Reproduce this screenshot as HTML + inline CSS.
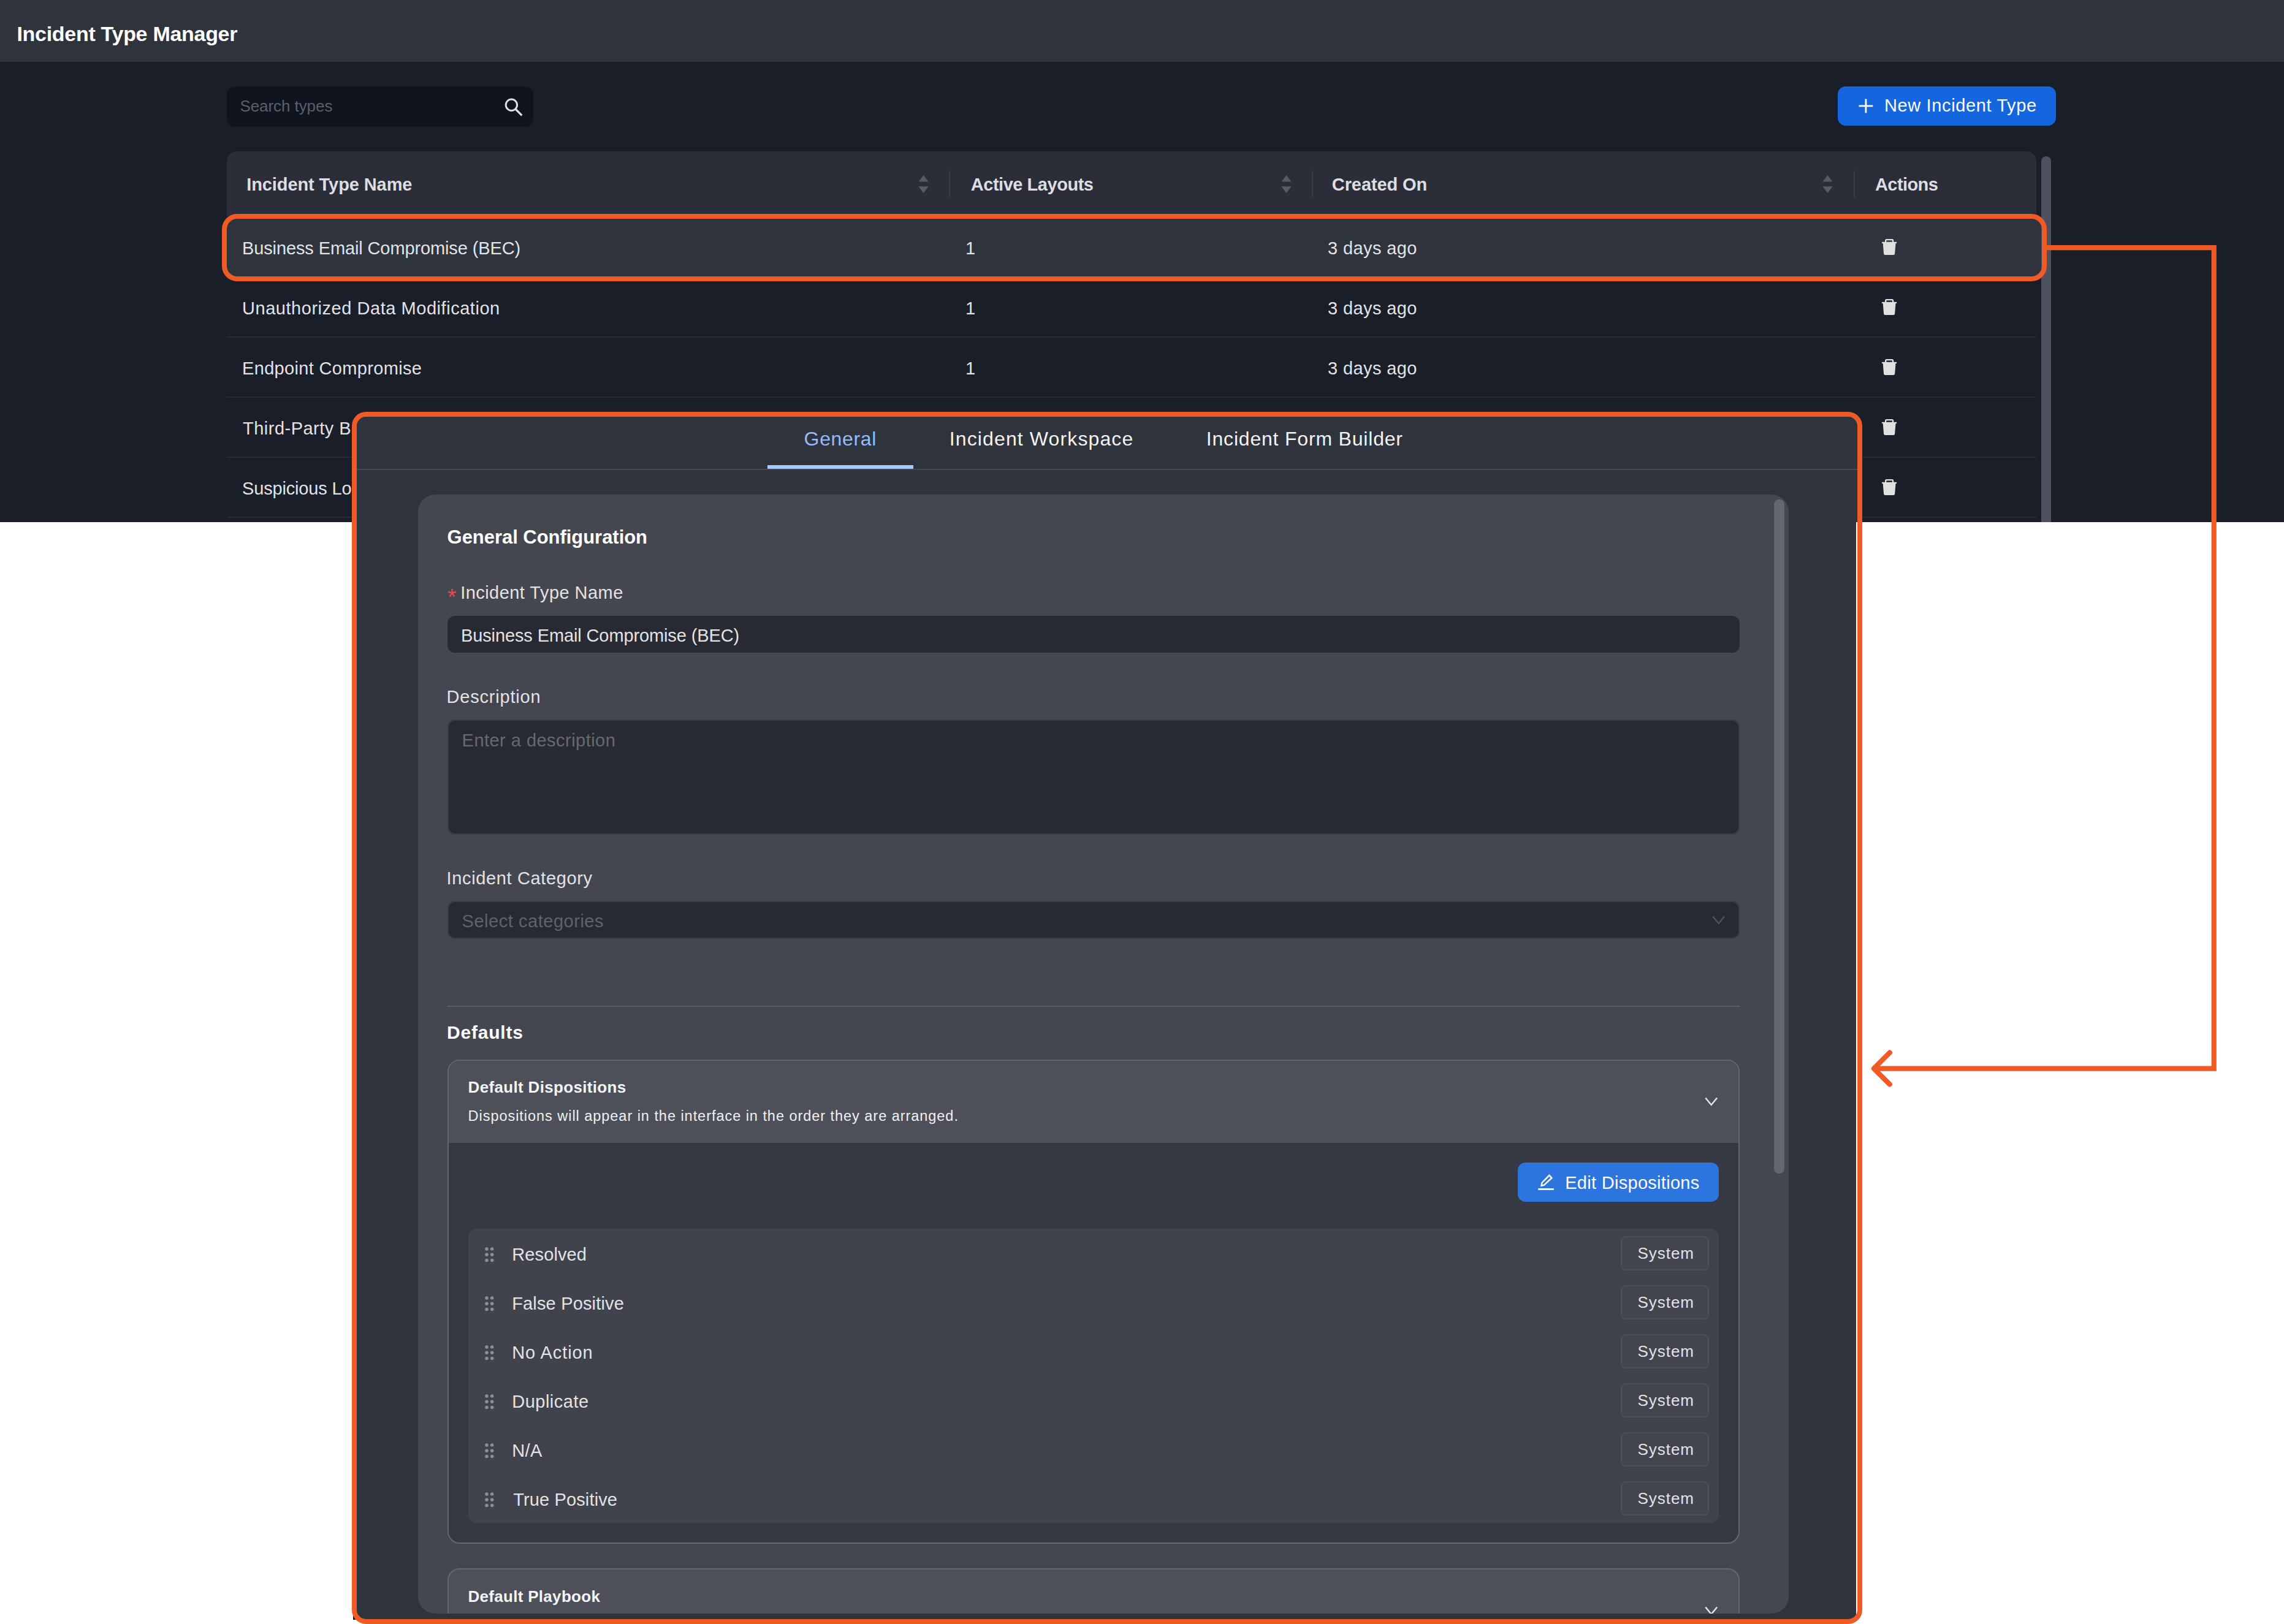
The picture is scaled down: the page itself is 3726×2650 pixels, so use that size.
<!DOCTYPE html>
<html lang="en">
<head>
<meta charset="utf-8">
<title>Incident Type Manager</title>
<style>
*{box-sizing:border-box;margin:0;padding:0}
html,body{width:3726px;height:2650px;overflow:hidden;background:#fff}
body{position:relative;font-family:"Liberation Sans",sans-serif;color:#e2e3e6}
.a{position:absolute}
.t{position:absolute;white-space:nowrap;line-height:40px;height:40px}
.b{font-weight:700}
#app{left:0;top:0;width:3726px;height:852px;background:#1a1e29;overflow:hidden}
#hdr{left:0;top:0;width:3726px;height:101px;background:#2f333c}
#search{left:370px;top:141px;width:500px;height:66px;border-radius:13.5px;background:#10141f}
#newbtn{left:2998px;top:141px;width:356px;height:64px;border-radius:13px;background:#1466de}
#thead{left:370px;top:247px;width:2952px;height:106px;background:#2b2e39;border-radius:16px 16px 0 0}
.vd{position:absolute;top:279px;width:2px;height:43px;background:#3a3d48}
.hl{position:absolute;left:370px;width:2952px;height:2px;background:#282b36}
#tscroll{left:3330px;top:255px;width:16px;height:620px;border-radius:8px;background:#4d515d}
#rowbg{left:366px;top:353px;width:2969px;height:102px;border-radius:18px;background:#2f333c}
#rowhl{left:362px;top:349px;width:2977px;height:110px;border:8px solid #f05a24;border-radius:25px}
#mbg{left:578px;top:676px;width:2456px;height:1970px;border-radius:12px 12px 12px 12px;background:#2f333c}
#mart{left:576px;top:2632px;width:8px;height:11px;background:#10151e}
#modal{left:574px;top:672px;width:2464px;height:1978px;border:8px solid #f05a24;border-radius:23px}
#card{left:682px;top:807px;width:2236px;height:1826px;border-radius:28px;background:#44474f;overflow:hidden}
#card>.o{position:absolute;left:-682px;top:-807px;width:3726px;height:2650px}
.inp{position:absolute;left:730px;width:2108px;border-radius:12px;background:#272a33}
.inb{border:2px solid #393c45}
#pan1{left:730px;top:1729px;width:2108px;height:790px;border:2px solid #66676d;border-radius:20px;background:#363943;overflow:hidden}
#pan1h{left:0;top:0;width:2104px;height:134px;background:#4d5059}
#pan2{left:730px;top:2559px;width:2108px;height:200px;border:2px solid #66676d;border-radius:20px;background:#4d5059}
#list{left:764px;top:2005px;width:2040px;height:480px;border-radius:14px;background:#40434c}
.tag{position:absolute;left:2644px;width:144px;height:56px;border:2px solid #4d5059;border-radius:9px;background:#42454e}
#editbtn{left:2476px;top:1897px;width:328px;height:64px;border-radius:12.5px;background:#2c74de}
</style>
</head>
<body>
<div id="app" class="a">
<div id="hdr" class="a"></div>
<div class="t b" id="x1" style="left:27.40px;top:35.02px;font-size:34px;color:#ffffff;letter-spacing:-0.290px">Incident Type Manager</div>
<div id="search" class="a"></div>
<div class="t" id="x2" style="left:391.40px;top:153.19px;font-size:26px;color:#5b5f6b;letter-spacing:-0.067px">Search types</div>
<svg class="a" style="left:820px;top:158px" width="36" height="36" viewBox="820 158 36 36"><circle cx="834.4" cy="171.3" r="9.2" fill="none" stroke="#dee0e6" stroke-width="3"/><path d="M841 178 L851.3 188.4" stroke="#dee0e6" stroke-width="3.2"/></svg>
<div id="newbtn" class="a"></div>
<svg class="a" style="left:3030px;top:160px" width="28" height="26" viewBox="3030 160 28 26"><path d="M3032.5 172.9 H3055.3 M3043.9 161.5 V184.3" stroke="#fff" stroke-width="2.8" fill="none"/></svg>
<div class="t" id="x11" style="left:3074.00px;top:152.15px;font-size:29px;color:#ffffff;letter-spacing:0.631px">New Incident Type</div>
<div id="thead" class="a"></div>
<div id="rowbg" class="a"></div>
<div class="t b" id="x3" style="left:402.20px;top:280.95px;font-size:29px;color:#dddee1;letter-spacing:-0.089px">Incident Type Name</div>
<div class="t b" id="x7" style="left:1583.80px;top:280.95px;font-size:29px;color:#dddee1;letter-spacing:-0.470px">Active Layouts</div>
<div class="t b" id="x8" style="left:2172.80px;top:280.95px;font-size:29px;color:#dddee1;letter-spacing:-0.091px">Created On</div>
<div class="t b" id="x10" style="left:3059.00px;top:280.95px;font-size:29px;color:#dddee1;letter-spacing:-0.584px">Actions</div>
<div class="vd" style="left:1548.3px"></div>
<div class="vd" style="left:2140.2px"></div>
<div class="vd" style="left:3024.2px"></div>
<svg class="a" style="left:1497.5px;top:285.7px" width="17" height="29" viewBox="0 0 17 29"><path d="M8.5 0 L16.6 10.6 H0.4 Z M8.5 28.9 L16.6 18.3 H0.4 Z" fill="#575b67"/></svg>
<svg class="a" style="left:2089.5px;top:285.7px" width="17" height="29" viewBox="0 0 17 29"><path d="M8.5 0 L16.6 10.6 H0.4 Z M8.5 28.9 L16.6 18.3 H0.4 Z" fill="#575b67"/></svg>
<svg class="a" style="left:2973.3px;top:285.7px" width="17" height="29" viewBox="0 0 17 29"><path d="M8.5 0 L16.6 10.6 H0.4 Z M8.5 28.9 L16.6 18.3 H0.4 Z" fill="#575b67"/></svg>
<div class="hl" style="top:549px"></div>
<div class="hl" style="top:647px"></div>
<div class="hl" style="top:745px"></div>
<div class="hl" style="top:843px"></div>
<div class="t" id="r0a" style="left:395.00px;top:385.35px;font-size:29px;color:#e2e3e6;letter-spacing:-0.117px">Business Email Compromise (BEC)</div>
<div class="t" id="r0b" style="left:1575.00px;top:385.35px;font-size:29px;color:#e2e3e6">1</div>
<div class="t" id="r0c" style="left:2166.00px;top:385.35px;font-size:29px;color:#e2e3e6;letter-spacing:0.391px">3 days ago</div>
<svg class="a" style="left:3069.9px;top:390.1px" width="25" height="27" viewBox="0 0 25 27"><path d="M0.6 4.7 H23.6 a0.6 0.6 0 0 1 0.6 0.6 V6.5 a0.6 0.6 0 0 1 -0.6 0.6 H22.5 L21.15 23.7 a2.3 2.3 0 0 1 -2.3 2.2 H5.35 a2.3 2.3 0 0 1 -2.3 -2.2 L1.7 7.1 H0.6 a0.6 0.6 0 0 1 -0.6 -0.6 V5.3 a0.6 0.6 0 0 1 0.6 -0.6 Z" fill="#e0e0e0"/><path d="M6.15 5.2 V2.7 a1.5 1.5 0 0 1 1.5 -1.5 h8.9 a1.5 1.5 0 0 1 1.5 1.5 V5.2" fill="none" stroke="#e0e0e0" stroke-width="2.3"/></svg>
<div class="t" id="r1a" style="left:395.00px;top:483.35px;font-size:29px;color:#e2e3e6;letter-spacing:0.538px">Unauthorized Data Modification</div>
<div class="t" id="r1b" style="left:1575.00px;top:483.35px;font-size:29px;color:#e2e3e6">1</div>
<div class="t" id="r1c" style="left:2166.00px;top:483.35px;font-size:29px;color:#e2e3e6;letter-spacing:0.391px">3 days ago</div>
<svg class="a" style="left:3069.9px;top:488.1px" width="25" height="27" viewBox="0 0 25 27"><path d="M0.6 4.7 H23.6 a0.6 0.6 0 0 1 0.6 0.6 V6.5 a0.6 0.6 0 0 1 -0.6 0.6 H22.5 L21.15 23.7 a2.3 2.3 0 0 1 -2.3 2.2 H5.35 a2.3 2.3 0 0 1 -2.3 -2.2 L1.7 7.1 H0.6 a0.6 0.6 0 0 1 -0.6 -0.6 V5.3 a0.6 0.6 0 0 1 0.6 -0.6 Z" fill="#e0e0e0"/><path d="M6.15 5.2 V2.7 a1.5 1.5 0 0 1 1.5 -1.5 h8.9 a1.5 1.5 0 0 1 1.5 1.5 V5.2" fill="none" stroke="#e0e0e0" stroke-width="2.3"/></svg>
<div class="t" id="r2a" style="left:395.00px;top:581.35px;font-size:29px;color:#e2e3e6;letter-spacing:0.334px">Endpoint Compromise</div>
<div class="t" id="r2b" style="left:1575.00px;top:581.35px;font-size:29px;color:#e2e3e6">1</div>
<div class="t" id="r2c" style="left:2166.00px;top:581.35px;font-size:29px;color:#e2e3e6;letter-spacing:0.391px">3 days ago</div>
<svg class="a" style="left:3069.9px;top:586.1px" width="25" height="27" viewBox="0 0 25 27"><path d="M0.6 4.7 H23.6 a0.6 0.6 0 0 1 0.6 0.6 V6.5 a0.6 0.6 0 0 1 -0.6 0.6 H22.5 L21.15 23.7 a2.3 2.3 0 0 1 -2.3 2.2 H5.35 a2.3 2.3 0 0 1 -2.3 -2.2 L1.7 7.1 H0.6 a0.6 0.6 0 0 1 -0.6 -0.6 V5.3 a0.6 0.6 0 0 1 0.6 -0.6 Z" fill="#e0e0e0"/><path d="M6.15 5.2 V2.7 a1.5 1.5 0 0 1 1.5 -1.5 h8.9 a1.5 1.5 0 0 1 1.5 1.5 V5.2" fill="none" stroke="#e0e0e0" stroke-width="2.3"/></svg>
<div class="t" id="r3a" style="left:396.00px;top:679.35px;font-size:29px;color:#e2e3e6;letter-spacing:0.486px">Third-Party Breach</div>
<div class="t" id="r3b" style="left:1581.00px;top:679.95px;font-size:29px;color:#e2e3e6">1</div>
<div class="t" id="r3c" style="left:2173.00px;top:679.95px;font-size:29px;color:#e2e3e6;letter-spacing:8.278px">3 days ago</div>
<svg class="a" style="left:3069.9px;top:684.1px" width="25" height="27" viewBox="0 0 25 27"><path d="M0.6 4.7 H23.6 a0.6 0.6 0 0 1 0.6 0.6 V6.5 a0.6 0.6 0 0 1 -0.6 0.6 H22.5 L21.15 23.7 a2.3 2.3 0 0 1 -2.3 2.2 H5.35 a2.3 2.3 0 0 1 -2.3 -2.2 L1.7 7.1 H0.6 a0.6 0.6 0 0 1 -0.6 -0.6 V5.3 a0.6 0.6 0 0 1 0.6 -0.6 Z" fill="#e0e0e0"/><path d="M6.15 5.2 V2.7 a1.5 1.5 0 0 1 1.5 -1.5 h8.9 a1.5 1.5 0 0 1 1.5 1.5 V5.2" fill="none" stroke="#e0e0e0" stroke-width="2.3"/></svg>
<div class="t" id="r4a" style="left:395.00px;top:777.35px;font-size:29px;color:#e2e3e6;letter-spacing:-0.165px">Suspicious Login</div>
<div class="t" id="r4b" style="left:1576.50px;top:777.80px;font-size:29px;color:#e2e3e6">1</div>
<div class="t" id="r4c" style="left:2166.50px;top:777.80px;font-size:29px;color:#e2e3e6">3 days ago</div>
<svg class="a" style="left:3069.9px;top:782.1px" width="25" height="27" viewBox="0 0 25 27"><path d="M0.6 4.7 H23.6 a0.6 0.6 0 0 1 0.6 0.6 V6.5 a0.6 0.6 0 0 1 -0.6 0.6 H22.5 L21.15 23.7 a2.3 2.3 0 0 1 -2.3 2.2 H5.35 a2.3 2.3 0 0 1 -2.3 -2.2 L1.7 7.1 H0.6 a0.6 0.6 0 0 1 -0.6 -0.6 V5.3 a0.6 0.6 0 0 1 0.6 -0.6 Z" fill="#e0e0e0"/><path d="M6.15 5.2 V2.7 a1.5 1.5 0 0 1 1.5 -1.5 h8.9 a1.5 1.5 0 0 1 1.5 1.5 V5.2" fill="none" stroke="#e0e0e0" stroke-width="2.3"/></svg>
<div id="tscroll" class="a"></div>
<div id="rowhl" class="a"></div>
</div>
<div id="mart" class="a"></div>
<div id="mbg" class="a"></div>
<div class="a" style="left:3027.9px;top:852px;width:4px;height:1792px;background:#fff"></div>
<div id="modal" class="a"></div>
<div class="a" style="left:582px;top:765px;width:2448px;height:2px;background:#464953"></div>
<div class="a" style="left:1252px;top:759px;width:238px;height:6px;background:#a4cbfd"></div>
<div class="t" id="x12" style="left:1311.60px;top:696.01px;font-size:32px;color:#93bdf9;letter-spacing:0.649px">General</div>
<div class="t" id="x13" style="left:1548.80px;top:696.01px;font-size:32px;color:#f4f4f5;letter-spacing:1.118px">Incident Workspace</div>
<div class="t" id="x14" style="left:1967.80px;top:696.01px;font-size:32px;color:#f4f4f5;letter-spacing:0.805px">Incident Form Builder</div>
<div id="card" class="a"><div class="o">
<div class="a" style="left:2894px;top:815px;width:16.5px;height:1100px;border-radius:8px;background:#64676f"></div>
<div class="t b" id="x15" style="left:729.60px;top:857.26px;font-size:31px;color:#ffffff;letter-spacing:-0.040px">General Configuration</div>
<div class="t" id="ast" style="left:730px;top:954.8px;font-size:37px;color:#e34a4c">*</div>
<div class="t" id="x16" style="left:751.20px;top:947.25px;font-size:29px;color:#e2e3e6;letter-spacing:0.452px">Incident Type Name</div>
<div class="inp" style="top:1005px;height:60px"></div>
<div class="t" id="x17" style="left:752.00px;top:1017.35px;font-size:29px;color:#e2e3e6;letter-spacing:-0.117px">Business Email Compromise (BEC)</div>
<div class="t" id="x18" style="left:728.60px;top:1116.95px;font-size:29px;color:#e2e3e6;letter-spacing:0.790px">Description</div>
<div class="inp inb" style="top:1174px;height:188px"></div>
<div class="t" id="x19" style="left:753.60px;top:1187.65px;font-size:29px;color:#666972;letter-spacing:0.468px">Enter a description</div>
<div class="t" id="x20" style="left:728.60px;top:1413.35px;font-size:29px;color:#e2e3e6;letter-spacing:0.629px">Incident Category</div>
<div class="inp inb" style="top:1470px;height:62px"></div>
<div class="t" id="x21" style="left:753.60px;top:1482.55px;font-size:29px;color:#5f626b;letter-spacing:0.529px">Select categories</div>
<svg class="a" style="left:2793px;top:1493.5px" width="22" height="15" viewBox="0 0 22 15"><path d="M1.3 1.5 L10.7 12.9 L20.1 1.5" fill="none" stroke="#50535d" stroke-width="2.4"/></svg>
<div class="a" style="left:730px;top:1641px;width:2108px;height:2px;background:#5a5d65"></div>
<div class="t b" id="x22" style="left:729.00px;top:1664.61px;font-size:30px;color:#ffffff;letter-spacing:0.805px">Defaults</div>
<div id="pan1" class="a"><div id="pan1h" class="a"></div></div>
<div class="t b" id="x23" style="left:763.60px;top:1753.89px;font-size:26px;color:#f4f4f5;letter-spacing:0.330px">Default Dispositions</div>
<div class="t" id="x24" style="left:763.60px;top:1800.86px;font-size:23.5px;color:#f0f0f2;letter-spacing:0.960px">Dispositions will appear in the interface in the order they are arranged.</div>
<svg class="a" style="left:2781px;top:1790.3px" width="22" height="15" viewBox="0 0 22 15"><path d="M1.3 1.5 L10.7 12.9 L20.1 1.5" fill="none" stroke="#e6e7ea" stroke-width="2.4"/></svg>
<div id="editbtn" class="a"></div>
<svg class="a" style="left:2505px;top:1912px" width="34" height="34" viewBox="2505 1912 34 34"><path d="M2509.3 1940.45 H2534.8" stroke="#fff" stroke-width="2.9" fill="none"/><path d="M2527.4 1917.8 L2531.3 1922.1 L2519.1 1933.7 L2514.6 1934.9 L2515.5 1930 Z" fill="none" stroke="#fff" stroke-width="2.5" stroke-linejoin="miter"/></svg>
<div class="t" id="x31" style="left:2553.20px;top:1909.55px;font-size:29px;color:#ffffff;letter-spacing:0.295px">Edit Dispositions</div>
<div id="list" class="a"></div>
<svg class="a" style="left:790.7px;top:2034.9px" width="15" height="25" viewBox="0 0 15 25"><g fill="#8c8f97"><circle cx="3" cy="3" r="2.75"/><circle cx="11.7" cy="3" r="2.75"/><circle cx="3" cy="12.2" r="2.75"/><circle cx="11.7" cy="12.2" r="2.75"/><circle cx="3" cy="21.4" r="2.75"/><circle cx="11.7" cy="21.4" r="2.75"/></g></svg>
<div class="t" id="i0" style="left:835.20px;top:2026.95px;font-size:29px;color:#e2e3e6;letter-spacing:0.130px">Resolved</div>
<div class="tag" style="top:2017px"></div>
<div class="t" id="s0" style="left:2671.40px;top:2024.59px;font-size:26px;color:#e2e3e6;letter-spacing:0.980px">System</div>
<svg class="a" style="left:790.7px;top:2114.9px" width="15" height="25" viewBox="0 0 15 25"><g fill="#8c8f97"><circle cx="3" cy="3" r="2.75"/><circle cx="11.7" cy="3" r="2.75"/><circle cx="3" cy="12.2" r="2.75"/><circle cx="11.7" cy="12.2" r="2.75"/><circle cx="3" cy="21.4" r="2.75"/><circle cx="11.7" cy="21.4" r="2.75"/></g></svg>
<div class="t" id="i1" style="left:835.20px;top:2106.95px;font-size:29px;color:#e2e3e6;letter-spacing:0.162px">False Positive</div>
<div class="tag" style="top:2097px"></div>
<div class="t" id="s1" style="left:2671.40px;top:2104.59px;font-size:26px;color:#e2e3e6;letter-spacing:0.980px">System</div>
<svg class="a" style="left:790.7px;top:2194.9px" width="15" height="25" viewBox="0 0 15 25"><g fill="#8c8f97"><circle cx="3" cy="3" r="2.75"/><circle cx="11.7" cy="3" r="2.75"/><circle cx="3" cy="12.2" r="2.75"/><circle cx="11.7" cy="12.2" r="2.75"/><circle cx="3" cy="21.4" r="2.75"/><circle cx="11.7" cy="21.4" r="2.75"/></g></svg>
<div class="t" id="i2" style="left:835.20px;top:2186.95px;font-size:29px;color:#e2e3e6;letter-spacing:0.925px">No Action</div>
<div class="tag" style="top:2177px"></div>
<div class="t" id="s2" style="left:2671.40px;top:2184.59px;font-size:26px;color:#e2e3e6;letter-spacing:0.980px">System</div>
<svg class="a" style="left:790.7px;top:2274.9px" width="15" height="25" viewBox="0 0 15 25"><g fill="#8c8f97"><circle cx="3" cy="3" r="2.75"/><circle cx="11.7" cy="3" r="2.75"/><circle cx="3" cy="12.2" r="2.75"/><circle cx="11.7" cy="12.2" r="2.75"/><circle cx="3" cy="21.4" r="2.75"/><circle cx="11.7" cy="21.4" r="2.75"/></g></svg>
<div class="t" id="i3" style="left:835.20px;top:2266.95px;font-size:29px;color:#e2e3e6;letter-spacing:0.499px">Duplicate</div>
<div class="tag" style="top:2257px"></div>
<div class="t" id="s3" style="left:2671.40px;top:2264.59px;font-size:26px;color:#e2e3e6;letter-spacing:0.980px">System</div>
<svg class="a" style="left:790.7px;top:2354.9px" width="15" height="25" viewBox="0 0 15 25"><g fill="#8c8f97"><circle cx="3" cy="3" r="2.75"/><circle cx="11.7" cy="3" r="2.75"/><circle cx="3" cy="12.2" r="2.75"/><circle cx="11.7" cy="12.2" r="2.75"/><circle cx="3" cy="21.4" r="2.75"/><circle cx="11.7" cy="21.4" r="2.75"/></g></svg>
<div class="t" id="i4" style="left:835.20px;top:2346.95px;font-size:29px;color:#e2e3e6;letter-spacing:0.350px">N/A</div>
<div class="tag" style="top:2337px"></div>
<div class="t" id="s4" style="left:2671.40px;top:2344.59px;font-size:26px;color:#e2e3e6;letter-spacing:0.980px">System</div>
<svg class="a" style="left:790.7px;top:2434.9px" width="15" height="25" viewBox="0 0 15 25"><g fill="#8c8f97"><circle cx="3" cy="3" r="2.75"/><circle cx="11.7" cy="3" r="2.75"/><circle cx="3" cy="12.2" r="2.75"/><circle cx="11.7" cy="12.2" r="2.75"/><circle cx="3" cy="21.4" r="2.75"/><circle cx="11.7" cy="21.4" r="2.75"/></g></svg>
<div class="t" id="i5" style="left:837.20px;top:2426.95px;font-size:29px;color:#e2e3e6;letter-spacing:0.136px">True Positive</div>
<div class="tag" style="top:2417px"></div>
<div class="t" id="s5" style="left:2671.40px;top:2424.59px;font-size:26px;color:#e2e3e6;letter-spacing:0.980px">System</div>
<div id="pan2" class="a"></div>
<div class="t b" id="x33" style="left:763.40px;top:2584.69px;font-size:26px;color:#f4f4f5;letter-spacing:0.306px">Default Playbook</div>
<svg class="a" style="left:2781px;top:2620.8px" width="22" height="15" viewBox="0 0 22 15"><path d="M1.3 1.5 L10.7 12.9 L20.1 1.5" fill="none" stroke="#e6e7ea" stroke-width="2.4"/></svg>
</div></div>
<svg class="a" style="left:3040px;top:390px" width="600" height="1400" viewBox="3040 390 600 1400"><path d="M3338 404.1 H3611.7 V1743.55 H3057" fill="none" stroke="#f05a24" stroke-width="8.2"/><path d="M3082.8 1717.7 L3056.9 1743.55 L3082.8 1769.4" fill="none" stroke="#f05a24" stroke-width="8.2" stroke-linecap="round" stroke-linejoin="round"/></svg>
</body>
</html>
